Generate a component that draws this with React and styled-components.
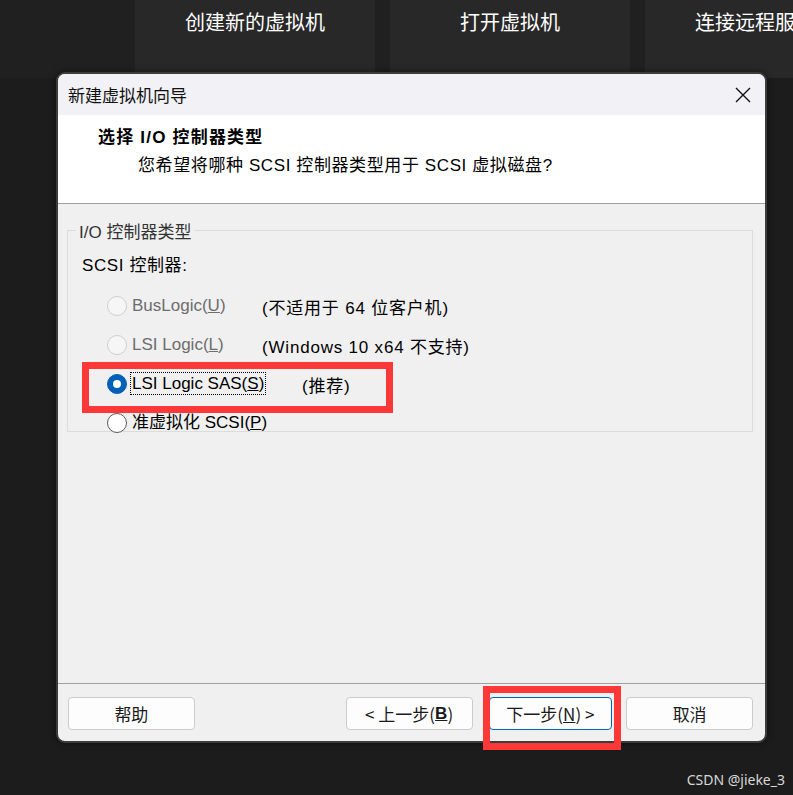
import React from "react";
import styled, { createGlobalStyle } from "styled-components";

const GlobalStyle = createGlobalStyle`
  html, body {
    margin: 0;
    padding: 0;
    background: #1c1c1c;
  }
  body {
    font-family: "Liberation Sans", "Noto Sans CJK SC", sans-serif;
  }
`;

const Page = styled.div`
  position: relative;
  width: 793px;
  height: 795px;
  overflow: hidden;
  background: #1c1c1c;
`;

const TileRow = styled.div`
  display: flex;
  height: 78px;
  background: #202020;
  padding-left: 135px;
  gap: 15px;
`;

const Tile = styled.div`
  flex: 0 0 ${(p) => p.w}px;
  background: #282828;
  color: #ffffff;
  font-family: "Noto Sans CJK SC", sans-serif;
  font-size: 20px;
  display: flex;
  justify-content: ${(p) => (p.left ? "flex-start" : "center")};
  padding-left: ${(p) => (p.left ? 50 : 0)}px;
  padding-top: 7px;
  box-sizing: border-box;
  white-space: nowrap;
  overflow: hidden;
`;

const Dialog = styled.div`
  position: absolute;
  left: 56px;
  top: 72px;
  width: 711px;
  height: 671px;
  box-sizing: border-box;
  border: 2px solid #3c3c3c;
  border-radius: 9px;
  background: #f0f0f0;
  overflow: hidden;
  display: flex;
  flex-direction: column;
  box-shadow: 0 0 6px rgba(0, 0, 0, 0.5);
`;

const TitleBar = styled.div`
  height: 41px;
  flex: 0 0 41px;
  background: #f2f2f6;
  display: flex;
  align-items: center;
  justify-content: space-between;
  padding: 0 14px 0 10px;
  font-family: "Noto Sans CJK SC", sans-serif;
  font-size: 17px;
  color: #111;
`;

const Header = styled.div`
  flex: 0 0 89px;
  background: #ffffff;
  border-bottom: 1px solid #a0a0a0;
  padding: 11px 0 0 40px;
  box-sizing: border-box;
`;

const HeaderTitle = styled.div`
  font-weight: bold;
  font-size: 17px;
  letter-spacing: 1.2px;
  color: #000;
  height: 24px;
  line-height: 24px;
`;

const HeaderSub = styled.div`
  font-size: 17px;
  letter-spacing: 0.6px;
  color: #000;
  margin-left: 40px;
  margin-top: 4px;
  height: 24px;
  line-height: 24px;
`;

const Body = styled.div`
  flex: 1;
  padding: 14px 12px 0 9px;
`;

const Group = styled.fieldset`
  margin: 0;
  border: 1px solid #dcdcdc;
  padding: 11px 0 12px 14px;
  height: 214px;
  box-sizing: border-box;
`;

const Legend = styled.legend`
  font-size: 17px;
  color: #333;
  padding: 0 3px;
  margin-left: -6px;
`;

const SubLabel = styled.div`
  font-size: 17px;
  letter-spacing: 0.6px;
  color: #000;
  height: 24px;
  line-height: 24px;
  margin-bottom: 16px;
`;

const Row = styled.div`
  display: flex;
  align-items: center;
  height: 24px;
  margin-bottom: ${(p) => p.mb ?? 15}px;
`;

const Radio = styled.span`
  box-sizing: border-box;
  width: 20px;
  height: 20px;
  border-radius: 50%;
  margin-left: 25px;
  margin-right: 5px;
  flex: 0 0 20px;
  border: 1px solid ${(p) => (p.on ? "#005fb8" : p.disabled ? "#cfcfcf" : "#5a5a5a")};
  background: ${(p) => (p.on ? "#005fb8" : p.disabled ? "#f6f6f6" : "#ffffff")};
  display: flex;
  align-items: center;
  justify-content: center;
  &::after {
    content: "";
    display: ${(p) => (p.on ? "block" : "none")};
    width: 8px;
    height: 8px;
    border-radius: 50%;
    background: #fff;
  }
`;

const Label = styled.span`
  font-size: 17px;
  color: ${(p) => (p.disabled ? "#6d6d6d" : "#000")};
  width: ${(p) => p.w}px;
  flex: 0 0 ${(p) => p.w}px;
  white-space: nowrap;
  line-height: 22px;
  span.focus {
    outline: 1px dotted #000;
    outline-offset: 1px;
  }
`;

const Note = styled.span`
  font-size: 17px;
  letter-spacing: 0.8px;
  color: #000;
  white-space: nowrap;
`;

const Highlight = styled.div`
  position: absolute;
  box-sizing: border-box;
  border: 7px solid #fc3838;
  left: ${(p) => p.x}px;
  top: ${(p) => p.y}px;
  width: ${(p) => p.w}px;
  height: ${(p) => p.h}px;
  pointer-events: none;
`;

const Footer = styled.div`
  flex: 0 0 58px;
  border-top: 1px solid #a0a0a0;
  display: flex;
  align-items: flex-start;
  padding: 13px 12px 0 10px;
  box-sizing: border-box;
`;

const Button = styled.div`
  box-sizing: border-box;
  width: ${(p) => p.w || 127}px;
  height: 33px;
  margin-left: ${(p) => p.ml || 0}px;
  border: 1px solid ${(p) => (p.primary ? "#0067c0" : "#cccccc")};
  border-radius: 4px;
  background: #fdfdfd;
  display: flex;
  align-items: center;
  justify-content: center;
  font-size: 17px;
  color: #1a1a1a;
  font-family: "Noto Sans CJK SC", sans-serif;
  b {
    font-family: "Liberation Sans", sans-serif;
    font-weight: bold;
  }
`;

const Watermark = styled.div`
  position: absolute;
  right: 8px;
  bottom: 6px;
  color: #d8d8d8;
  font-family: "Noto Sans", sans-serif;
  font-size: 14px;
`;

const CloseIcon = () => (
  <svg width="16" height="16" viewBox="0 0 16 16">
    <path d="M1 1 L15 15 M15 1 L1 15" stroke="#111" strokeWidth="1.4" fill="none" />
  </svg>
);

export default function App() {
  return (
    <Page>
      <GlobalStyle />
      <TileRow>
        <Tile w={240}>创建新的虚拟机</Tile>
        <Tile w={240}>打开虚拟机</Tile>
        <Tile w={148} left>连接远程服</Tile>
      </TileRow>

      <Dialog>
        <TitleBar>
          <span>新建虚拟机向导</span>
          <CloseIcon />
        </TitleBar>
        <Header>
          <HeaderTitle>选择 I/O 控制器类型</HeaderTitle>
          <HeaderSub>您希望将哪种 SCSI 控制器类型用于 SCSI 虚拟磁盘?</HeaderSub>
        </Header>
        <Body>
          <Group>
            <Legend>I/O 控制器类型</Legend>
            <SubLabel>SCSI 控制器:</SubLabel>
            <Row>
              <Radio disabled />
              <Label disabled w={130}>
                BusLogic(<u>U</u>)
              </Label>
              <Note>(不适用于 64 位客户机)</Note>
            </Row>
            <Row>
              <Radio disabled />
              <Label disabled w={130}>
                LSI Logic(<u>L</u>)
              </Label>
              <Note>(Windows 10 x64 不支持)</Note>
            </Row>
            <Row>
              <Radio on />
              <Label w={170}>
                <span className="focus">
                  LSI Logic SAS(<u>S</u>)
                </span>
              </Label>
              <Note>(推荐)</Note>
            </Row>
            <Row mb={0}>
              <Radio />
              <Label w={200}>
                准虚拟化 SCSI(<u>P</u>)
              </Label>
            </Row>
          </Group>
        </Body>
        <Footer>
          <Button>帮助</Button>
          <Button ml={151}>
            &lt; 上一步(<b><u>B</u></b>)
          </Button>
          <Button ml={16} w={124} primary>
            下一步(<u>N</u>) &gt;
          </Button>
          <Button ml={14}>取消</Button>
        </Footer>
      </Dialog>

      <Highlight x={82} y={362} w={311} h={51} />
      <Highlight x={483} y={686} w={138} h={64} />
      <Watermark>CSDN @jieke_3</Watermark>
    </Page>
  );
}
